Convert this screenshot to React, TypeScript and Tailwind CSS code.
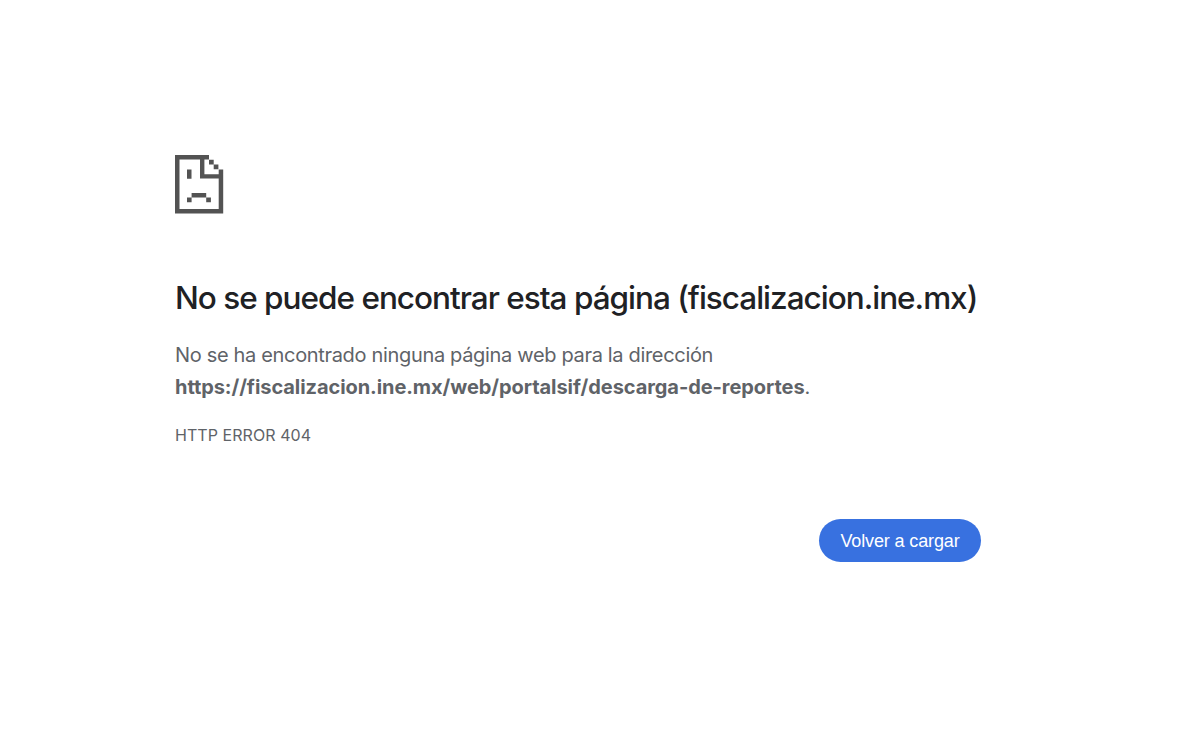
function SadPageIcon() {
  return (
    <svg
      className="h-[59px] w-[49px] text-[#535353]"
      viewBox="0 0 49 59"
      fill="currentColor"
      aria-hidden="true"
    >
      <path d="M0 0h34v4.5H4.5v49.5H43.7V23.5H25V4.3h4.4v15H43.7V14.5H48.2V58.5H0z" />
      <path d="M34 4.7h4.7v4.7H34zM38.7 9.6h4.7v4.7h-4.7z" />
      <path d="M12 14.5h4.5v9.3H12zM16.6 38h14.6v4.6H16.6zM12 42.6h4.6v4.6H12zM31.2 42.6h4.7v4.6h-4.7z" />
    </svg>
  );
}

export default function App() {
  const host = 'fiscalizacion.ine.mx';
  const url = `https://${host}/web/portalsif/descarga-de-reportes`;

  return (
    <main className="min-h-screen bg-white pt-[155px] pl-[175px] font-['Inter',sans-serif] text-[#5f6368]">
      <div className="w-[806px] whitespace-nowrap">
        <SadPageIcon />
        <h1 className="mt-[64px] text-[31.5px] leading-[40px] font-medium tracking-[-1px] text-[#202124]">
          No se puede encontrar esta página ({host})
        </h1>
        <p className="mt-[21px] text-[20px] leading-[32px] tracking-[-0.33px]">
          No se ha encontrado ninguna página web para la dirección
          <br />
          <strong className="font-bold tracking-[-0.07px]">{url}</strong>.
        </p>
        <div className="mt-[20px] text-[16px] leading-[24px] tracking-[0.06px]">HTTP ERROR 404</div>
        <div className="mt-[72px] flex justify-end">
          <button className="h-[43px] w-[162px] rounded-full bg-[#3871e0] pt-px font-['Liberation_Sans',sans-serif] text-[18px] tracking-[-0.13px] text-white">
            Volver a cargar
          </button>
        </div>
      </div>
    </main>
  );
}
